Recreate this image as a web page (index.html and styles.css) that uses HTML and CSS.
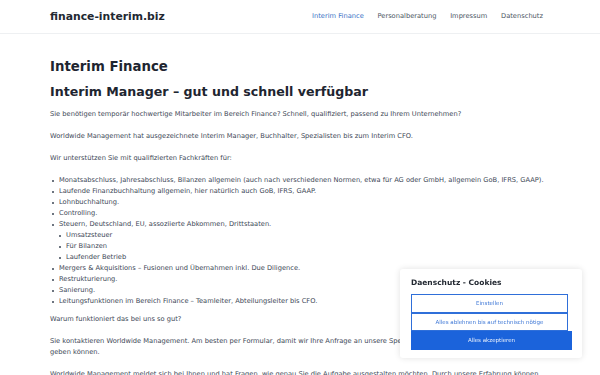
FILE: index.html
```html
<!DOCTYPE html>
<html lang="de">
<head>
<meta charset="utf-8">
<title>finance-interim.biz</title>
<link rel="stylesheet" href="styles.css">
</head>
<body>
<header class="site-header">
  <div class="container header-inner">
    <a class="logo" href="#">finance-interim.biz</a>
    <nav class="nav">
      <a class="nav-link active" href="#">Interim Finance</a>
      <a class="nav-link" href="#">Personalberatung</a>
      <a class="nav-link" href="#">Impressum</a>
      <a class="nav-link" href="#">Datenschutz</a>
    </nav>
  </div>
</header>
<main class="container content">
  <h1>Interim Finance</h1>
  <h2>Interim Manager – gut und schnell verfügbar</h2>
  <p>Sie benötigen temporär hochwertige Mitarbeiter im Bereich Finance? Schnell, qualifiziert, passend zu Ihrem Unternehmen?</p>
  <p>Worldwide Management hat ausgezeichnete Interim Manager, Buchhalter, Spezialisten bis zum Interim CFO.</p>
  <p>Wir unterstützen Sie mit qualifizierten Fachkräften für:</p>
  <ul>
    <li>Monatsabschluss, Jahresabschluss, Bilanzen allgemein (auch nach verschiedenen Normen, etwa für AG oder GmbH, allgemein GoB, IFRS, GAAP).</li>
    <li>Laufende Finanzbuchhaltung allgemein, hier natürlich auch GoB, IFRS, GAAP.</li>
    <li>Lohnbuchhaltung.</li>
    <li>Controlling.</li>
    <li>Steuern, Deutschland, EU, assoziierte Abkommen, Drittstaaten.
      <ul>
        <li>Umsatzsteuer</li>
        <li>Für Bilanzen</li>
        <li>Laufender Betrieb</li>
      </ul>
    </li>
    <li>Mergers &amp; Akquisitions – Fusionen und Übernahmen inkl. Due Diligence.</li>
    <li>Restrukturierung.</li>
    <li>Sanierung.</li>
    <li>Leitungsfunktionen im Bereich Finance – Teamleiter, Abteilungsleiter bis CFO.</li>
  </ul>
  <p>Warum funktioniert das bei uns so gut?</p>
  <p>Sie kontaktieren Worldwide Management. Am besten per Formular, damit wir Ihre Anfrage an unsere Spezialisten weiter<br>geben können.</p>
  <p>Worldwide Management meldet sich bei Ihnen und hat Fragen, wie genau Sie die Aufgabe ausgestalten möchten. Durch unsere Erfahrung können</p>
</main>
<div class="cookie-box">
  <div class="cookie-title">Daenschutz - Cookies</div>
  <div class="cookie-buttons">
    <button class="btn btn-outline">Einstellen</button>
    <button class="btn btn-outline">Alles ablehnen bis auf technisch nötige</button>
    <button class="btn btn-primary">Alles akzeptieren</button>
  </div>
</div>
</body>
</html>
```
FILE: styles.css
```css
* { box-sizing: border-box; }
html, body { margin: 0; padding: 0; }
body {
  font-family: "DejaVu Sans", Verdana, sans-serif;
  color: #3d4756;
  background: #fff;
  font-size: 6.68px;
  line-height: 11px;
  overflow: hidden;
  height: 375px;
}
a { text-decoration: none; }
.container {
  width: 500px;
  margin: 0 auto;
}
.site-header {
  border-bottom: 1px solid #eef0f2;
}
.header-inner {
  display: flex;
  align-items: center;
  justify-content: space-between;
  height: 33px;
}
.logo {
  font-weight: bold;
  font-size: 10.8px;
  color: #222831;
}
.nav {
  display: flex;
  gap: 13.7px;
  padding-right: 7px;
}
.nav-link {
  color: #4b5563;
  font-size: 6.7px;
}
.nav-link.active { color: #3b74c6; }
.content {
  padding-top: 24px;
}
h1, h2 {
  color: #1e2530;
  font-weight: bold;
  margin: 0;
  line-height: 18px;
}
h1 { font-size: 13.3px; margin-bottom: 7px; }
h2 { font-size: 12.6px; margin-bottom: 7.5px; }
p { margin: 0 0 11px; }
ul {
  margin: 0 0 7px;
  padding-left: 9px;
  list-style: none;
}
ul li { position: relative; }
ul li::before {
  content: "";
  position: absolute;
  left: -7px;
  top: 5px;
  width: 2px;
  height: 2px;
  border-radius: 50%;
  background: #3d4756;
}
ul ul { margin: 0; padding-left: 7px; }
.cookie-box {
  position: fixed;
  left: 400px;
  top: 269px;
  width: 182px;
  height: 89px;
  background: #fff;
  border-radius: 3px;
  box-shadow: 0 0 6px rgba(0,0,0,0.12);
  padding: 9px 10px 0 11px;
}
.cookie-title {
  font-weight: bold;
  font-size: 7.5px;
  color: #222831;
  line-height: 10px;
  margin-bottom: 6px;
}
.cookie-buttons {
  display: flex;
  flex-direction: column;
}
.btn {
  font-family: "DejaVu Sans", Verdana, sans-serif;
  font-size: 5.5px;
  height: 18.5px;
  padding: 0;
  cursor: pointer;
  border-radius: 0;
}
.btn-outline {
  width: 157px;
  background: #fff;
  border: 1px solid #2f6fd9;
  color: #3f78d6;
}
.btn-primary {
  width: 161px;
  background: #1b63db;
  border: 1px solid #1b63db;
  color: #e9f0fc;
}
```
